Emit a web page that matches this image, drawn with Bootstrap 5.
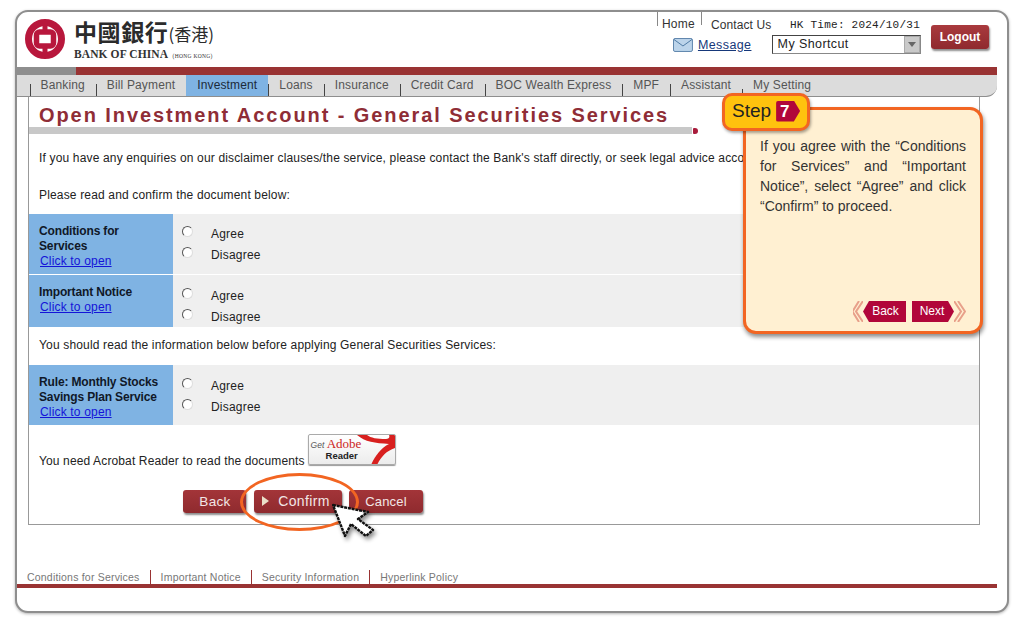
<!DOCTYPE html>
<html lang="en">
<head>
<meta charset="utf-8">
<title>Open Investment Account</title>
<link href="https://cdn.jsdelivr.net/npm/bootstrap@5.3.0/dist/css/bootstrap.min.css" rel="stylesheet">
<style>
html,body{height:630px;overflow:hidden;background:#fff}
body{font-family:"Liberation Sans",Arial,sans-serif;font-size:12px;letter-spacing:.2px;color:#222;line-height:15px}
.shell{position:relative;margin:10px 15px 0;width:994px;height:603px;border:2px solid #8e8e8e;border-radius:13px;box-shadow:0 1px 3px rgba(0,0,0,.3);background:#fff}
.top-head{height:55px}
.brand-mark{margin:7px 0 0 8px;width:40px;height:40px;flex:none}
.brand-words{margin:6px 0 0 9px}
.brand-cn{font-family:"Noto Sans CJK TC",sans-serif;font-weight:700;font-size:23px;line-height:27px;letter-spacing:.6px;color:#2b2b2b;white-space:nowrap}
.brand-cn span{font-size:17px;font-weight:400;letter-spacing:0}
.brand-en{font-family:"Liberation Serif",serif;font-weight:700;font-size:11.5px;line-height:12px;color:#333;letter-spacing:.1px;margin-top:1px;white-space:nowrap}
.brand-en small{font-size:5.5px;font-weight:400;margin-left:2px;letter-spacing:.3px}
.util{margin-left:auto;width:264px;flex:none}
.util-row{height:24px}
.tick{border-left:1px solid #888;height:13px;padding:5px 0 0 4px;line-height:15px;color:#333}
.home-link{width:44px;height:14px}
.contact-link{padding:6px 0 0 9px;width:89px;letter-spacing:.1px}
.hk-time{font-family:"Liberation Mono",monospace;font-size:11px;letter-spacing:.24px;padding-top:6px;color:#222;white-space:nowrap}
.msg-row{margin-left:16px;margin-top:-1px}
.msg-link{color:#16387a;font-size:12.5px;text-decoration:underline;margin-left:5px;letter-spacing:.4px;width:74px;padding-top:2px}
.shortcut{width:150px;height:19px;border:1px solid #888;border-top-color:#444;border-left-color:#444;background:#fff;padding:0 0 0 5px;font-size:12.5px;letter-spacing:.4px;line-height:17px;color:#222}
.shortcut i{margin-left:auto;width:16px;height:17px;background:#c9c9c9;border:1px solid #aaa;display:flex;align-items:center;justify-content:center}
.shortcut i::after{content:"";border:4px solid transparent;border-top:5px solid #666;border-bottom:0}
.logout-btn{margin:13px 18px 0 10px;width:58px;height:24px;background:linear-gradient(#a93a3e,#8f2a2e);color:#fff;font-weight:700;font-size:12px;border-radius:3px;box-shadow:1px 2px 2px rgba(0,0,0,.45);letter-spacing:0}
.red-rule{height:8px;margin-right:10px;background:#993333;border-left:59px solid #8e8e8e}
.tabs-bar{height:22px;margin-right:10px;background:#dcdcdc;border-bottom:1px solid #8e8e8e;border-bottom-right-radius:11px;padding-left:12.5px;color:#555}
.tab-item{padding:3px 11px 0 11px;position:relative;white-space:nowrap;letter-spacing:.14px}
.tab-item::before{content:"";position:absolute;left:0;top:9px;height:12px;border-left:1px solid #444}
.tab-item.on{background:#7fb3e3;color:#1b2a3a}
.tab-item.on::before{display:none}
.tab-item:last-child::before{height:7px;top:14px}
.pane{margin-left:11px;width:952px;height:428px;border:1px solid #999;border-top:0;overflow:hidden}
.pane-title{font-size:20px;font-weight:700;line-height:24px;letter-spacing:1.92px;color:#8f2d36;padding:6px 0 0 10px;white-space:nowrap}
.title-rule{position:relative;width:663px;height:7px;background:#c8c8c8}
.title-rule::after{content:"";position:absolute;left:664px;top:1px;width:5px;height:6px;background:#a81b3b;border-radius:1px 3px 3px 1px}
.note{padding-left:10px;white-space:nowrap;letter-spacing:.16px;color:#222}
.note-a{margin-top:17px}
.note-b{margin-top:22px}
.note-c{margin-top:11px}
.deal{background:#efefef;height:60px}
.deal-a{margin-top:11px}
.deal-b{height:52px;margin-top:1px}
.deal-c{margin-top:12px}
.deal-tag{width:144px;background:#7fb3e3;padding:10px 0 0 10px;font-weight:700;color:#101828;letter-spacing:-.15px;line-height:15px;flex:none}
.deal-tag a{display:block;font-weight:400;color:#1414d8;letter-spacing:.17px;padding-left:1px}
.choices{padding-left:9px;display:flex;flex-direction:column;gap:6px;padding-top:13px}
.choice{display:flex;height:15px;margin-bottom:0}
.fake-radio{appearance:none;width:11px;height:11px;border-radius:50%;margin:-1px 18px 0 0;background:#fff;border:1px solid;border-color:#555 #ddd #ddd #555;flex:none}
.deal-b .choices,.deal-c .choices{padding-top:14px}
.reader-row{padding-left:10px;margin-top:9px;height:32px;align-items:flex-end;letter-spacing:.13px}
.reader-row>span{margin-bottom:-3px}
.adobe{position:relative;width:88px;height:31px;margin:0 0 1px 3px;border:1px solid #aaa;border-radius:2px;background:linear-gradient(#fff,#ececec);box-shadow:0 1px 1px #999;overflow:hidden;color:#222;letter-spacing:0}
.adobe svg{position:absolute;right:0;top:0}
.adobe-get{position:absolute;left:2px;top:2px;font:italic 8.5px/13px "Liberation Sans",sans-serif;color:#555}
.adobe-get b{font:400 13px/13px "Liberation Serif",serif;color:#c22}
.adobe-r{position:absolute;left:17px;top:15px;font-weight:700;font-size:9.5px;line-height:12px}
.act-row{padding-left:154px;margin-top:24px;gap:8px}
.act-btn{height:23px;background:linear-gradient(#a33539,#8f2a2e);color:#f2e6e6;border-radius:3px;box-shadow:1px 2px 2px rgba(0,0,0,.45);font-size:14px;line-height:23px;text-align:center;letter-spacing:.35px}
.act-back{width:63px;font-size:13.5px;padding-left:1px}
.act-go{width:88px;padding-left:12px;position:relative}
.act-go::before{content:"";position:absolute;left:8px;top:6px;border-left:7px solid #eadfc9;border-top:5px solid transparent;border-bottom:5px solid transparent}
.act-cancel{width:74px;margin-left:-1px;font-size:13px;letter-spacing:.2px}
.foot-links{margin-top:45px;height:15px;margin-bottom:-1px;padding-left:10px;color:#777;font-size:10.5px;line-height:15px;letter-spacing:.2px}
.foot-links span{padding-right:10px;margin-right:10px;border-right:1px solid #993333;white-space:nowrap}
.foot-links span:last-child{border:0}
.foot-rule{position:relative;height:4px;margin-right:10px;background:#993333}
.oval-mark{position:absolute;left:223px;top:461px;width:119px;height:58px;border:3px solid #f26522;border-radius:50%}
.pointer{position:absolute;left:315px;top:490px;filter:drop-shadow(2px 3px 2px rgba(0,0,0,.45))}
.help-box{position:absolute;left:726px;top:95px;width:240px;height:227px;border:3px solid #f26522;border-radius:13px;background:#fff0d2;box-shadow:1px 3px 4px rgba(0,0,0,.45);padding:26px 14px 0 14px;font-size:14px;line-height:20px;letter-spacing:0;color:#333;text-align:justify}
.help-tag{position:absolute;left:705px;top:81px;width:88px;height:38px;border:3px solid #f26522;border-radius:10px;background:#ffc20e;box-shadow:1px 2px 3px rgba(0,0,0,.35);font-size:19px;line-height:28px;padding:0 0 2px 7px;color:#222;letter-spacing:0;gap:5px}
.step-num{width:24px;height:21px;background:#b1063a;color:#fff;font-family:"Liberation Sans",sans-serif;font-weight:700;font-size:17px;line-height:21px;padding-left:4px;clip-path:polygon(0 0,74% 0,100% 50%,74% 100%,0 100%);border-radius:2px}
.help-nav{position:absolute;right:14px;bottom:9px;gap:6px;align-items:center}
.help-btn{height:21px;background:#b1063a;color:#fff;font-size:12px;line-height:21px;text-align:center}
.help-back{width:43px;padding-left:2px;clip-path:polygon(6px 0,100% 0,100% 100%,6px 100%,0 50%)}
.help-next{width:42px;padding-right:2px;clip-path:polygon(0 0,calc(100% - 6px) 0,100% 50%,calc(100% - 6px) 100%,0 100%)}
</style>
</head>
<body>
<div class="shell">
  <header class="top-head d-flex">
    <svg class="brand-mark" viewBox="0 0 40 40" aria-hidden="true">
      <circle cx="20" cy="20" r="16.500" fill="none" stroke="#b8173c" stroke-width="7"/>
      <rect x="11.500" y="13" width="17" height="14" rx="3" fill="none" stroke="#b8173c" stroke-width="5.500"/>
      <rect x="17.500" y="2" width="5" height="10" fill="#b8173c"/>
      <rect x="17.500" y="28" width="5" height="10" fill="#b8173c"/>
    </svg>
    <div class="brand-words">
      <div class="brand-cn">中國銀行<span>(香港)</span></div>
      <div class="brand-en">BANK OF CHINA <small>(HONG KONG)</small></div>
    </div>
    <div class="util">
      <div class="util-row d-flex">
        <div class="tick home-link">Home</div>
        <div class="tick contact-link">Contact Us</div>
        <div class="hk-time">HK Time: 2024/10/31</div>
      </div>
      <div class="d-flex align-items-center msg-row">
        <svg width="20" height="14" viewBox="0 0 20 14" aria-hidden="true"><rect x=".5" y=".5" width="19" height="13" rx="1.500" fill="#bcd4ea" stroke="#5f86ad"/><path d="M1 1.500 10 8l9-6.500" fill="none" stroke="#4f7aa5"/></svg>
        <div class="msg-link">Message</div>
        <div class="shortcut d-flex align-items-center">My Shortcut<i></i></div>
      </div>
    </div>
    <div class="logout-btn d-flex align-items-center justify-content-center">Logout</div>
  </header>
  <div class="red-rule"></div>
  <nav class="tabs-bar d-flex">
    <div class="tab-item">Banking</div>
    <div class="tab-item">Bill Payment</div>
    <div class="tab-item on">Investment</div>
    <div class="tab-item">Loans</div>
    <div class="tab-item">Insurance</div>
    <div class="tab-item">Credit Card</div>
    <div class="tab-item">BOC Wealth Express</div>
    <div class="tab-item">MPF</div>
    <div class="tab-item">Assistant</div>
    <div class="tab-item">My Setting</div>
  </nav>
  <main class="pane">
    <div class="pane-title">Open Investment Account - General Securities Services</div>
    <div class="title-rule"></div>
    <p class="note note-a mb-0">If you have any enquiries on our disclaimer clauses/the service, please contact the Bank's staff directly, or seek legal advice accordingly.</p>
    <p class="note note-b mb-0">Please read and confirm the document below:</p>
    <div class="deal deal-a d-flex">
      <div class="deal-tag">Conditions for<br>Services<a href="#">Click to open</a></div>
      <div class="choices">
        <label class="choice"><input class="fake-radio" type="radio" name="a">Agree</label>
        <label class="choice"><input class="fake-radio" type="radio" name="a">Disagree</label>
      </div>
    </div>
    <div class="deal deal-b d-flex">
      <div class="deal-tag">Important Notice<a href="#">Click to open</a></div>
      <div class="choices">
        <label class="choice"><input class="fake-radio" type="radio" name="b">Agree</label>
        <label class="choice"><input class="fake-radio" type="radio" name="b">Disagree</label>
      </div>
    </div>
    <p class="note note-c mb-0">You should read the information below before applying General Securities Services:</p>
    <div class="deal deal-c d-flex">
      <div class="deal-tag">Rule: Monthly Stocks<br>Savings Plan Service<a href="#">Click to open</a></div>
      <div class="choices">
        <label class="choice"><input class="fake-radio" type="radio" name="c">Agree</label>
        <label class="choice"><input class="fake-radio" type="radio" name="c">Disagree</label>
      </div>
    </div>
    <div class="reader-row d-flex">
      <span>You need Acrobat Reader to read the documents</span>
      <div class="adobe">
        <svg width="42" height="30" viewBox="0 0 42 30" aria-hidden="true"><path d="M4 0c8 7 18 8 32 9-8 4-14 12-18 21h6c4-8 9-14 18-17V0h-6c1 2 0 4-3 4C24 4 18 3 14 0z" fill="#d8201f"/></svg>
        <div class="adobe-get">Get <b>Adobe</b></div>
        <div class="adobe-r">Reader</div>
      </div>
    </div>
    <div class="act-row d-flex">
      <div class="act-btn act-back">Back</div>
      <div class="act-btn act-go">Confirm</div>
      <div class="act-btn act-cancel">Cancel</div>
    </div>
  </main>
  <footer>
    <div class="foot-links d-flex"><span>Conditions for Services</span><span>Important Notice</span><span>Security Information</span><span>Hyperlink Policy</span></div>
    <div class="foot-rule"></div>
  </footer>

  <div class="oval-mark"></div>
  <svg class="pointer" width="44" height="50" viewBox="0 0 44 50" aria-hidden="true">
    <path d="M1 3 36 10l-10 7 15 11-7 6-15-12-6 12z" fill="#fff" stroke="#111" stroke-width="2.400" stroke-dasharray="3 .8" stroke-linejoin="round"/>
  </svg>

  <aside class="help-box">
    If you agree with the “Conditions for Services” and “Important Notice”, select “Agree” and click “Confirm” to proceed.
    <div class="help-nav d-flex">
      <svg width="10" height="21" viewBox="0 0 10 21" style="margin-right:-6px" aria-hidden="true"><path d="M10 0 3 10.500 10 21M6 0-.5 10.500 6 21" fill="none" stroke="#e8a08a" stroke-width="2"/></svg>
      <div class="help-btn help-back">Back</div>
      <div class="help-btn help-next">Next</div>
      <svg width="12" height="21" viewBox="0 0 12 21" style="margin-left:-6px" aria-hidden="true"><path d="M0 0 7 10.500 0 21M4 0 11 10.500 4 21" fill="none" stroke="#e8a08a" stroke-width="2"/></svg>
    </div>
  </aside>
  <div class="help-tag d-flex align-items-center">Step<span class="step-num">7</span></div>
</div>
</body>
</html>
